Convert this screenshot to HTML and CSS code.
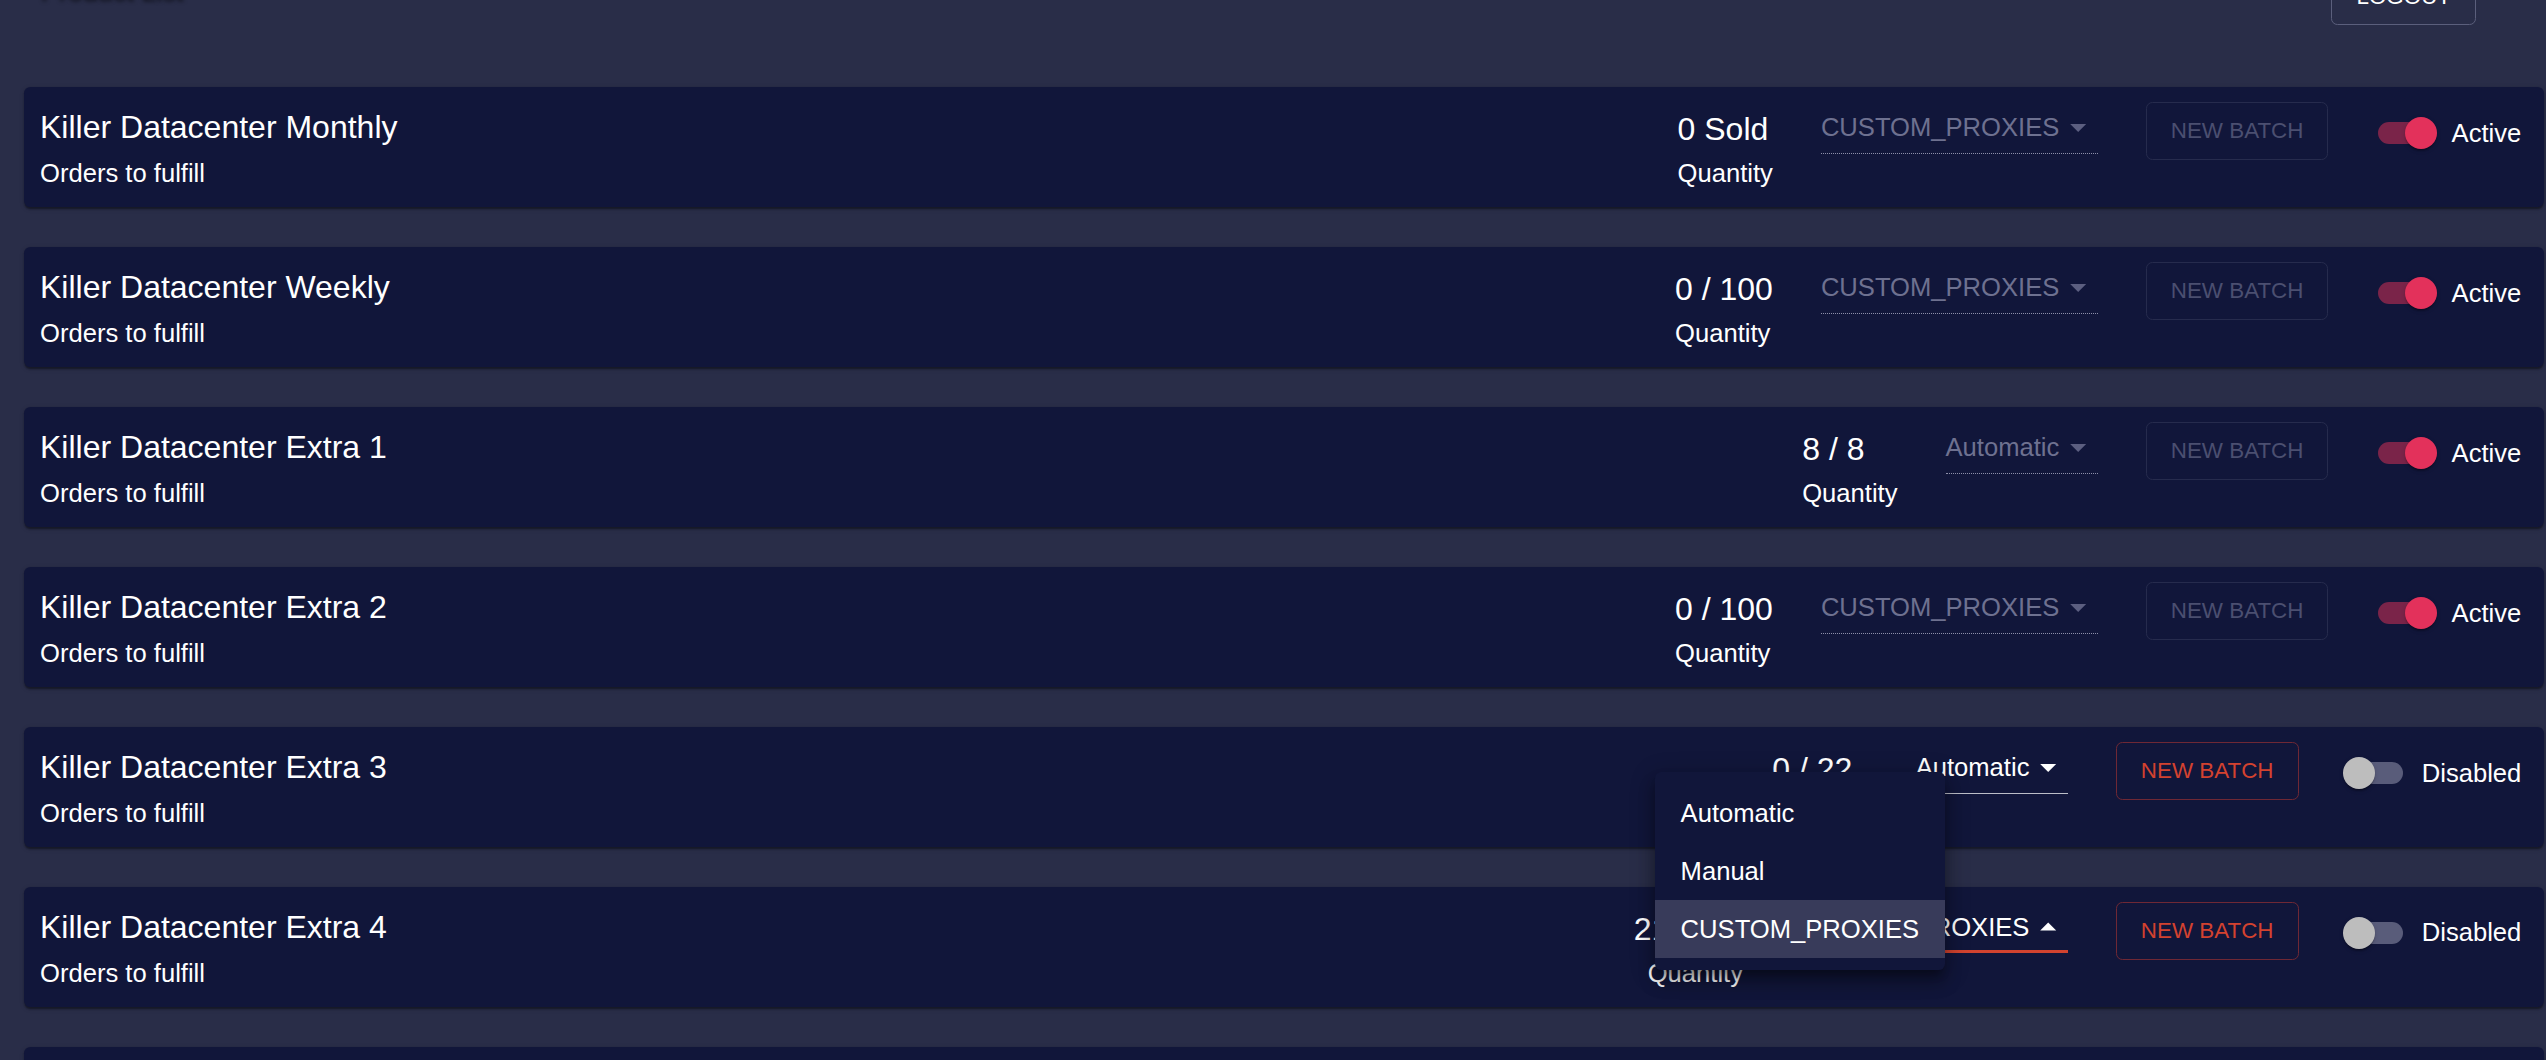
FILE: index.html
```html
<!DOCTYPE html>
<html lang="en">
<head>
<meta charset="utf-8">
<title>Products</title>
<link rel="stylesheet" href="styles.css">
</head>
<body>
<div class="page">
  <header class="header">
    <h1 class="heading">Product List</h1>
    <button class="btn btn-logout">Logout</button>
  </header>

  <main class="cards">
    <section class="card">
      <div class="info">
        <div class="title">Killer Datacenter Monthly</div>
        <div class="sub">Orders to fulfill</div>
      </div>
      <div class="controls">
        <div class="qty"><div class="qty-num">0 Sold</div><div class="sub">Quantity</div></div>
        <div class="select is-disabled"><span class="select-text">CUSTOM_PROXIES</span><svg class="arrow" viewBox="0 0 24 24"><path d="M7 10l5 5 5-5z"/></svg></div>
        <button class="btn btn-disabled">New Batch</button>
        <div class="toggle"><div class="switch is-on"><div class="track"><div class="thumb"></div></div></div><span class="label">Active</span></div>
      </div>
    </section>

    <section class="card">
      <div class="info">
        <div class="title">Killer Datacenter Weekly</div>
        <div class="sub">Orders to fulfill</div>
      </div>
      <div class="controls">
        <div class="qty"><div class="qty-num">0 / 100</div><div class="sub">Quantity</div></div>
        <div class="select is-disabled"><span class="select-text">CUSTOM_PROXIES</span><svg class="arrow" viewBox="0 0 24 24"><path d="M7 10l5 5 5-5z"/></svg></div>
        <button class="btn btn-disabled">New Batch</button>
        <div class="toggle"><div class="switch is-on"><div class="track"><div class="thumb"></div></div></div><span class="label">Active</span></div>
      </div>
    </section>

    <section class="card">
      <div class="info">
        <div class="title">Killer Datacenter Extra 1</div>
        <div class="sub">Orders to fulfill</div>
      </div>
      <div class="controls">
        <div class="qty"><div class="qty-num">8 / 8</div><div class="sub">Quantity</div></div>
        <div class="select is-disabled"><span class="select-text">Automatic</span><svg class="arrow" viewBox="0 0 24 24"><path d="M7 10l5 5 5-5z"/></svg></div>
        <button class="btn btn-disabled">New Batch</button>
        <div class="toggle"><div class="switch is-on"><div class="track"><div class="thumb"></div></div></div><span class="label">Active</span></div>
      </div>
    </section>

    <section class="card">
      <div class="info">
        <div class="title">Killer Datacenter Extra 2</div>
        <div class="sub">Orders to fulfill</div>
      </div>
      <div class="controls">
        <div class="qty"><div class="qty-num">0 / 100</div><div class="sub">Quantity</div></div>
        <div class="select is-disabled"><span class="select-text">CUSTOM_PROXIES</span><svg class="arrow" viewBox="0 0 24 24"><path d="M7 10l5 5 5-5z"/></svg></div>
        <button class="btn btn-disabled">New Batch</button>
        <div class="toggle"><div class="switch is-on"><div class="track"><div class="thumb"></div></div></div><span class="label">Active</span></div>
      </div>
    </section>

    <section class="card">
      <div class="info">
        <div class="title">Killer Datacenter Extra 3</div>
        <div class="sub">Orders to fulfill</div>
      </div>
      <div class="controls">
        <div class="qty"><div class="qty-num">0 / 22</div><div class="sub">Quantity</div></div>
        <div class="select"><span class="select-text">Automatic</span><svg class="arrow" viewBox="0 0 24 24"><path d="M7 10l5 5 5-5z"/></svg></div>
        <button class="btn btn-red">New Batch</button>
        <div class="toggle"><div class="switch"><div class="track"><div class="thumb"></div></div></div><span class="label">Disabled</span></div>
      </div>
    </section>

    <section class="card">
      <div class="info">
        <div class="title">Killer Datacenter Extra 4</div>
        <div class="sub">Orders to fulfill</div>
      </div>
      <div class="controls">
        <div class="qty qty-narrow"><div class="qty-num qty-overflow">21 / 100</div><div class="sub">Quantity</div></div>
        <div class="select is-open"><span class="select-text">CUSTOM_PROXIES</span><svg class="arrow" viewBox="0 0 24 24"><path d="M7 14l5-5 5 5z"/></svg></div>
        <button class="btn btn-red">New Batch</button>
        <div class="toggle"><div class="switch"><div class="track"><div class="thumb"></div></div></div><span class="label">Disabled</span></div>
      </div>
    </section>

    <section class="card">
      <div class="info">
        <div class="title">Killer Datacenter Extra 5</div>
        <div class="sub">Orders to fulfill</div>
      </div>
      <div class="controls">
        <div class="qty"><div class="qty-num">0 / 50</div><div class="sub">Quantity</div></div>
        <div class="select"><span class="select-text">Automatic</span><svg class="arrow" viewBox="0 0 24 24"><path d="M7 10l5 5 5-5z"/></svg></div>
        <button class="btn btn-red">New Batch</button>
        <div class="toggle"><div class="switch"><div class="track"><div class="thumb"></div></div></div><span class="label">Disabled</span></div>
      </div>
    </section>
  </main>
</div>

<ul class="menu">
  <li class="menu-item">Automatic</li>
  <li class="menu-item">Manual</li>
  <li class="menu-item is-selected">CUSTOM_PROXIES</li>
</ul>
</body>
</html>
```

FILE: styles.css
```css
html, body {
  margin: 0;
  padding: 0;
}

body {
  background: #292d48;
  color: #ffffff;
  font-family: "Liberation Sans", Arial, Helvetica, sans-serif;
  width: 2546px;
  height: 1060px;
  overflow: hidden;
  position: relative;
}

.page {
  margin-top: -32px;
  padding: 0 2px 0 24px;
}

.header {
  display: flex;
  justify-content: space-between;
  align-items: flex-start;
  height: 57.2px;
  margin-bottom: 61.8px;
}

.heading {
  margin: 0;
  padding: 8.5px 0 0 17px;
  font-size: 27px;
  line-height: 27px;
  font-weight: 400;
  color: #d8d9e2;
  text-shadow: 0 2px 4px rgba(0, 0, 0, 0.75);
}

.btn {
  font-family: inherit;
  font-size: 22.4px;
  line-height: 39.2px;
  text-transform: uppercase;
  background: transparent;
  border: 1px solid;
  border-radius: 6.4px;
  padding: 8px 24px;
  margin: 0;
  cursor: pointer;
  white-space: nowrap;
}

.btn-logout {
  color: #ffffff;
  border-color: #5b5f7c;
  margin-right: 68px;
}

.cards {
  display: flex;
  flex-direction: column;
  gap: 40px;
}

.card {
  background: #11163a;
  border-radius: 6.4px;
  box-shadow: 0 3.2px 1.6px -1.6px rgba(0, 0, 0, 0.25),
              0 1.6px 1.6px 0 rgba(0, 0, 0, 0.16),
              0 1.6px 4.8px 0 rgba(0, 0, 0, 0.14);
  padding: 15.4px 22.7px 15px 16px;
  display: flex;
  justify-content: space-between;
  align-items: flex-start;
  height: 89.6px;
  flex: none;
}

.title {
  font-size: 32px;
  line-height: 51.2px;
}

.sub {
  font-size: 25.6px;
  line-height: 38.4px;
}

.controls {
  display: flex;
  align-items: flex-start;
}

.qty {
  display: flex;
  flex-direction: column;
  align-items: flex-start;
  margin-right: 48px;
}

.qty-num {
  font-size: 32px;
  line-height: 51.2px;
  padding-top: 1.5px;
  margin-bottom: -1.5px;
  white-space: nowrap;
}

.qty-narrow {
  width: 95.3px;
}

.qty-overflow {
  margin-left: -14px;
}

.select {
  display: flex;
  align-items: center;
  margin-right: 48px;
  padding: 9.6px 0 10.2px 0;
  border-bottom: 1px solid rgba(255, 255, 255, 0.72);
  font-size: 25.6px;
  line-height: 30.4px;
  color: #ffffff;
  white-space: nowrap;
}

.select.is-disabled {
  color: #6e7190;
  border-bottom: 1px dotted #8d8fa8;
}

.select.is-open {
  padding-bottom: 8.2px;
  border-bottom: 3px solid #d2432f;
}

.arrow {
  width: 38.4px;
  height: 38.4px;
  margin: -4px 0;
  fill: #ffffff;
  flex: none;
}

.select.is-disabled .arrow {
  fill: #5c5f80;
}

.btn-disabled {
  color: #4b4f70;
  border-color: #262b4d;
  margin-right: 30.4px;
}

.btn-red {
  color: #d3422f;
  border-color: #6f2835;
  margin-right: 30.4px;
}

.toggle {
  display: flex;
  align-items: center;
}

.switch {
  width: 92.8px;
  height: 60.8px;
  box-sizing: border-box;
  padding: 0 19.2px;
  display: flex;
  align-items: center;
}

.track {
  width: 54.4px;
  height: 22.4px;
  border-radius: 11.2px;
  background: #595c7a;
  display: flex;
  align-items: center;
  flex: none;
}

.thumb {
  width: 32px;
  height: 32px;
  border-radius: 50%;
  background: #bdbdbd;
  margin-left: -4.8px;
  flex: none;
  box-shadow: 0 3.2px 1.6px -1.6px rgba(0, 0, 0, 0.2),
              0 1.6px 1.6px 0 rgba(0, 0, 0, 0.14),
              0 1.6px 4.8px 0 rgba(0, 0, 0, 0.12);
}

.switch.is-on .track {
  background: #7a2449;
}

.switch.is-on .thumb {
  background: #e3315b;
  margin-left: 27.2px;
}

.label {
  font-size: 25.6px;
  line-height: 38.4px;
  white-space: nowrap;
}

.menu {
  position: absolute;
  left: 1655px;
  top: 772px;
  margin: 0;
  padding: 12.8px 0;
  list-style: none;
  background: #11163a;
  border-radius: 6.4px;
  box-shadow: 0 8px 8px -4.8px rgba(0, 0, 0, 0.3),
              0 12.8px 16px 1.6px rgba(0, 0, 0, 0.2),
              0 4.8px 22.4px 3.2px rgba(0, 0, 0, 0.18);
}

.menu-item {
  font-size: 25.6px;
  line-height: 38.4px;
  padding: 9.6px 25.6px;
  color: #ffffff;
  white-space: nowrap;
}

.menu-item.is-selected {
  background: #383b5a;
}
```
